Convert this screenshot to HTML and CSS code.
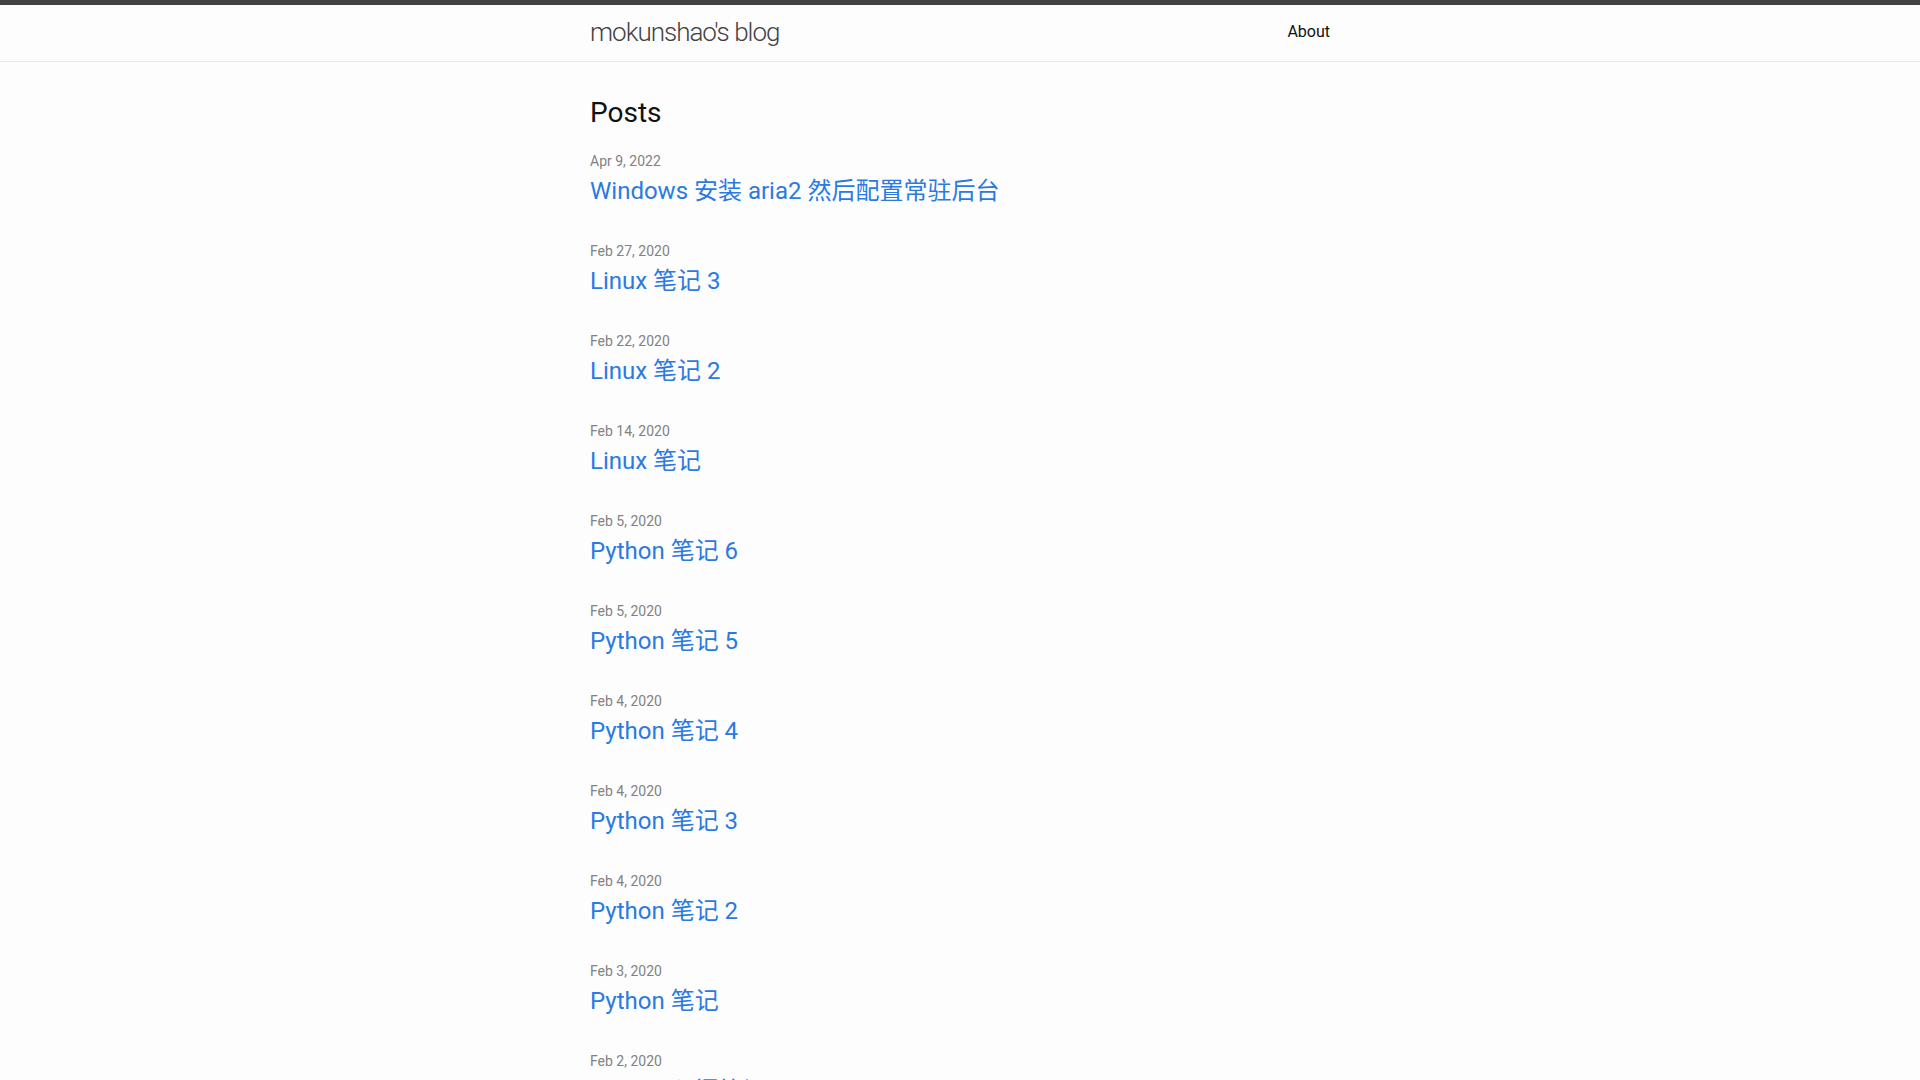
FILE: index.html
```html
<!DOCTYPE html>
<html lang="zh-CN">

<head>
    <meta charset="UTF-8">
    <meta name="viewport" content="width=device-width, initial-scale=1.0">
    <title>mokunshao's blog</title>
    <link rel="stylesheet" href="styles.css">
</head>

<body>
    <header class="site-header">
        <div class="wrapper header-inner">
            <a class="site-title" href="#">mokunshao's blog</a>
            <nav class="site-nav">
                <a class="page-link" href="#">About</a>
            </nav>
        </div>
    </header>

    <main class="page-content">
        <div class="wrapper">
            <h2 class="post-list-heading">Posts</h2>
            <ul class="post-list">
                <li>
                    <span class="post-meta">Apr 9, 2022</span>
                    <h3><a class="post-link" href="#">Windows 安装 aria2 然后配置常驻后台</a></h3>
                </li>
                <li>
                    <span class="post-meta">Feb 27, 2020</span>
                    <h3><a class="post-link" href="#">Linux 笔记 3</a></h3>
                </li>
                <li>
                    <span class="post-meta">Feb 22, 2020</span>
                    <h3><a class="post-link" href="#">Linux 笔记 2</a></h3>
                </li>
                <li>
                    <span class="post-meta">Feb 14, 2020</span>
                    <h3><a class="post-link" href="#">Linux 笔记</a></h3>
                </li>
                <li>
                    <span class="post-meta">Feb 5, 2020</span>
                    <h3><a class="post-link" href="#">Python 笔记 6</a></h3>
                </li>
                <li>
                    <span class="post-meta">Feb 5, 2020</span>
                    <h3><a class="post-link" href="#">Python 笔记 5</a></h3>
                </li>
                <li>
                    <span class="post-meta">Feb 4, 2020</span>
                    <h3><a class="post-link" href="#">Python 笔记 4</a></h3>
                </li>
                <li>
                    <span class="post-meta">Feb 4, 2020</span>
                    <h3><a class="post-link" href="#">Python 笔记 3</a></h3>
                </li>
                <li>
                    <span class="post-meta">Feb 4, 2020</span>
                    <h3><a class="post-link" href="#">Python 笔记 2</a></h3>
                </li>
                <li>
                    <span class="post-meta">Feb 3, 2020</span>
                    <h3><a class="post-link" href="#">Python 笔记</a></h3>
                </li>
                <li>
                    <span class="post-meta">Feb 2, 2020</span>
                    <h3><a class="post-link" href="#">Docker 入门笔记</a></h3>
                </li>
            </ul>
        </div>
    </main>
</body>
</html>
```

FILE: styles.css
```css
/* Prosty motyw w stylu minima */
body {
    margin: 0;
    font-family: Roboto, "Noto Sans CJK SC", sans-serif;
    font-size: 16px;
    font-weight: 400;
    line-height: 1.5;
    color: #111;
    background-color: #fdfdfd;
}
a {
    color: #2a7ae2;
    text-decoration: none;
}
h2,
h3 {
    margin: 0;
    font-weight: 400;
}
.wrapper {
    max-width: 740px;
    margin: 0 auto;
    padding: 0 30px;
}
.site-header {
    border-top: 5px solid #424242;
    border-bottom: 1px solid #e8e8e8;
    min-height: 55.95px;
}
.header-inner {
    display: flex;
    justify-content: space-between;
    align-items: flex-start;
}
.site-title {
    font-size: 26px;
    font-weight: 300;
    line-height: 54px;
    letter-spacing: -1px;
    color: #424242;
}
.site-nav {
    line-height: 54px;
}
.page-link {
    color: #111;
    line-height: 1.5;
}
.page-content {
    padding: 30px 0;
}
.post-list-heading {
    font-size: 28px;
    margin-bottom: 15px;
}
.post-list {
    margin: 0;
    padding: 0;
    list-style: none;
}
.post-list li {
    margin-bottom: 30px;
}
.post-meta {
    font-size: 14px;
    color: #828282;
}
.post-link {
    display: block;
    font-size: 24px;
}
```
